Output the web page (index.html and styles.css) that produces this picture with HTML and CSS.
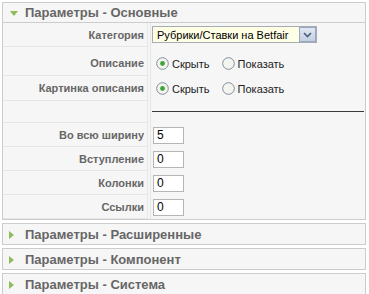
FILE: index.html
```html
<!DOCTYPE html>
<html>
<head>
<meta charset="utf-8">
<link rel="stylesheet" href="styles.css">
</head>
<body>
<div class="pane">
  <div class="panel">
    <h3 class="toggler open">
      <svg class="arrow" width="8" height="5" viewBox="0 0 8 5"><polygon points="0,0 8,0 4,5" fill="#8fbc5c"/></svg>
      <span>Параметры - Основные</span>
    </h3>
    <div class="content">
      <div class="row r-sel">
        <div class="key">Категория</div>
        <div class="val">
          <div class="select"><span class="sel-text">Рубрики/Ставки на Betfair</span>
            <span class="sel-btn"><svg width="9" height="6" viewBox="0 0 9 6"><polyline points="1,1 4.5,4.5 8,1" fill="none" stroke="#4b5d7c" stroke-width="1.6"/></svg></span>
          </div>
        </div>
      </div>
      <div class="row r-rad1">
        <div class="key">Описание</div>
        <div class="val">
          <label class="radio"><svg width="13" height="13" viewBox="0 0 13 13"><circle cx="6.5" cy="6.5" r="5.8" fill="#f4f4f0" stroke="#7f8f9e"/><circle cx="6.5" cy="6.5" r="2.4" fill="#3fa33a"/></svg>Скрыть</label>
          <label class="radio"><svg width="13" height="13" viewBox="0 0 13 13"><circle cx="6.5" cy="6.5" r="5.8" fill="#f4f4f0" stroke="#7f8f9e"/></svg>Показать</label>
        </div>
      </div>
      <div class="row r-rad2">
        <div class="key">Картинка описания</div>
        <div class="val">
          <label class="radio"><svg width="13" height="13" viewBox="0 0 13 13"><circle cx="6.5" cy="6.5" r="5.8" fill="#f4f4f0" stroke="#7f8f9e"/><circle cx="6.5" cy="6.5" r="2.4" fill="#3fa33a"/></svg>Скрыть</label>
          <label class="radio"><svg width="13" height="13" viewBox="0 0 13 13"><circle cx="6.5" cy="6.5" r="5.8" fill="#f4f4f0" stroke="#7f8f9e"/></svg>Показать</label>
        </div>
      </div>
      <div class="row r-hr">
        <div class="key"></div>
        <div class="val"><div class="hr"></div></div>
      </div>
      <div class="row r-in">
        <div class="key">Во всю ширину</div>
        <div class="val"><div class="input">5</div></div>
      </div>
      <div class="row r-in">
        <div class="key">Вступление</div>
        <div class="val"><div class="input">0</div></div>
      </div>
      <div class="row r-in">
        <div class="key">Колонки</div>
        <div class="val"><div class="input">0</div></div>
      </div>
      <div class="row r-in last">
        <div class="key">Ссылки</div>
        <div class="val"><div class="input">0</div></div>
      </div>
    </div>
  </div>
  <div class="panel">
    <h3 class="toggler">
      <svg class="arrow-r" width="5" height="8" viewBox="0 0 5 8"><polygon points="0,0 5,4 0,8" fill="#8fbc5c"/></svg>
      <span>Параметры - Расширенные</span>
    </h3>
  </div>
  <div class="panel">
    <h3 class="toggler">
      <svg class="arrow-r" width="5" height="8" viewBox="0 0 5 8"><polygon points="0,0 5,4 0,8" fill="#8fbc5c"/></svg>
      <span>Параметры - Компонент</span>
    </h3>
  </div>
  <div class="panel">
    <h3 class="toggler">
      <svg class="arrow-r" width="5" height="8" viewBox="0 0 5 8"><polygon points="0,0 5,4 0,8" fill="#8fbc5c"/></svg>
      <span>Параметры - Система</span>
    </h3>
  </div>
</div>
</body>
</html>
```

FILE: styles.css
```css
* { box-sizing: border-box; }
body {
  margin: 0;
  background: #fff;
  font-family: "Liberation Sans", Arial, sans-serif;
  font-size: 11px;
  color: #000;
}
.pane {
  padding: 2px 3px 0 2px;
}
.panel {
  border: 1px solid #cccccc;
  margin-bottom: 3px;
  background: #f6f6f6;
}
.toggler {
  margin: 0;
  height: 20px;
  display: flex;
  align-items: center;
  font-size: 13px;
  font-weight: bold;
  color: #666;
  background: #f6f6f6;
}
.toggler.open {
  border-bottom: 1px solid #cccccc;
}
.arrow {
  margin: 1px 7px 0 7px;
}
.arrow-r {
  margin: 1px 11px 0 6px;
}
.content {
  background: #f6f6f6;
}
.row {
  display: flex;
  height: 24px;
}
.r-rad1 { height: 29px; }
.r-rad2 { height: 25px; }
.r-hr { height: 22px; }
.key {
  width: 145px;
  flex: none;
  border-right: 1px solid #e6e6e6;
  border-bottom: 1px solid #e6e6e6;
  color: #666;
  font-weight: bold;
  text-align: right;
  padding-right: 3px;
  display: flex;
  align-items: center;
  justify-content: flex-end;
}
.r-rad1 .key { padding-top: 4px; }
.val {
  flex: 1;
  margin-left: 2px;
  border-left: 1px solid #e6e6e6;
  display: flex;
  align-items: center;
  padding-left: 1px;
}
.r-rad1 .val { padding-top: 4px; }
.select {
  width: 165px;
  height: 17px;
  border: 1px solid #a5acb2;
  background: #ffffe6;
  display: flex;
  align-items: center;
  justify-content: space-between;
  margin-top: -1px;
}
.sel-text {
  padding-left: 4px;
}
.sel-btn {
  width: 17px;
  height: 15px;
  border: 1px solid #98a8c4;
  background: linear-gradient(#e2e8f2, #c4cfe0);
  display: flex;
  align-items: center;
  justify-content: center;
}
.radio {
  display: flex;
  align-items: center;
  margin-left: 4px;
  margin-right: 8px;
  color: #222;
}
.radio svg {
  margin-right: 3px;
}
.hr {
  width: 212px;
  border-top: 1px solid #3a3a3a;
  margin-top: -2px;
}
.input {
  width: 31px;
  height: 17px;
  background: #fff;
  border: 1px solid #b5b5b5;
  padding-left: 3px;
  line-height: 15px;
  font-size: 12px;
  margin-left: 1px;
}
```
